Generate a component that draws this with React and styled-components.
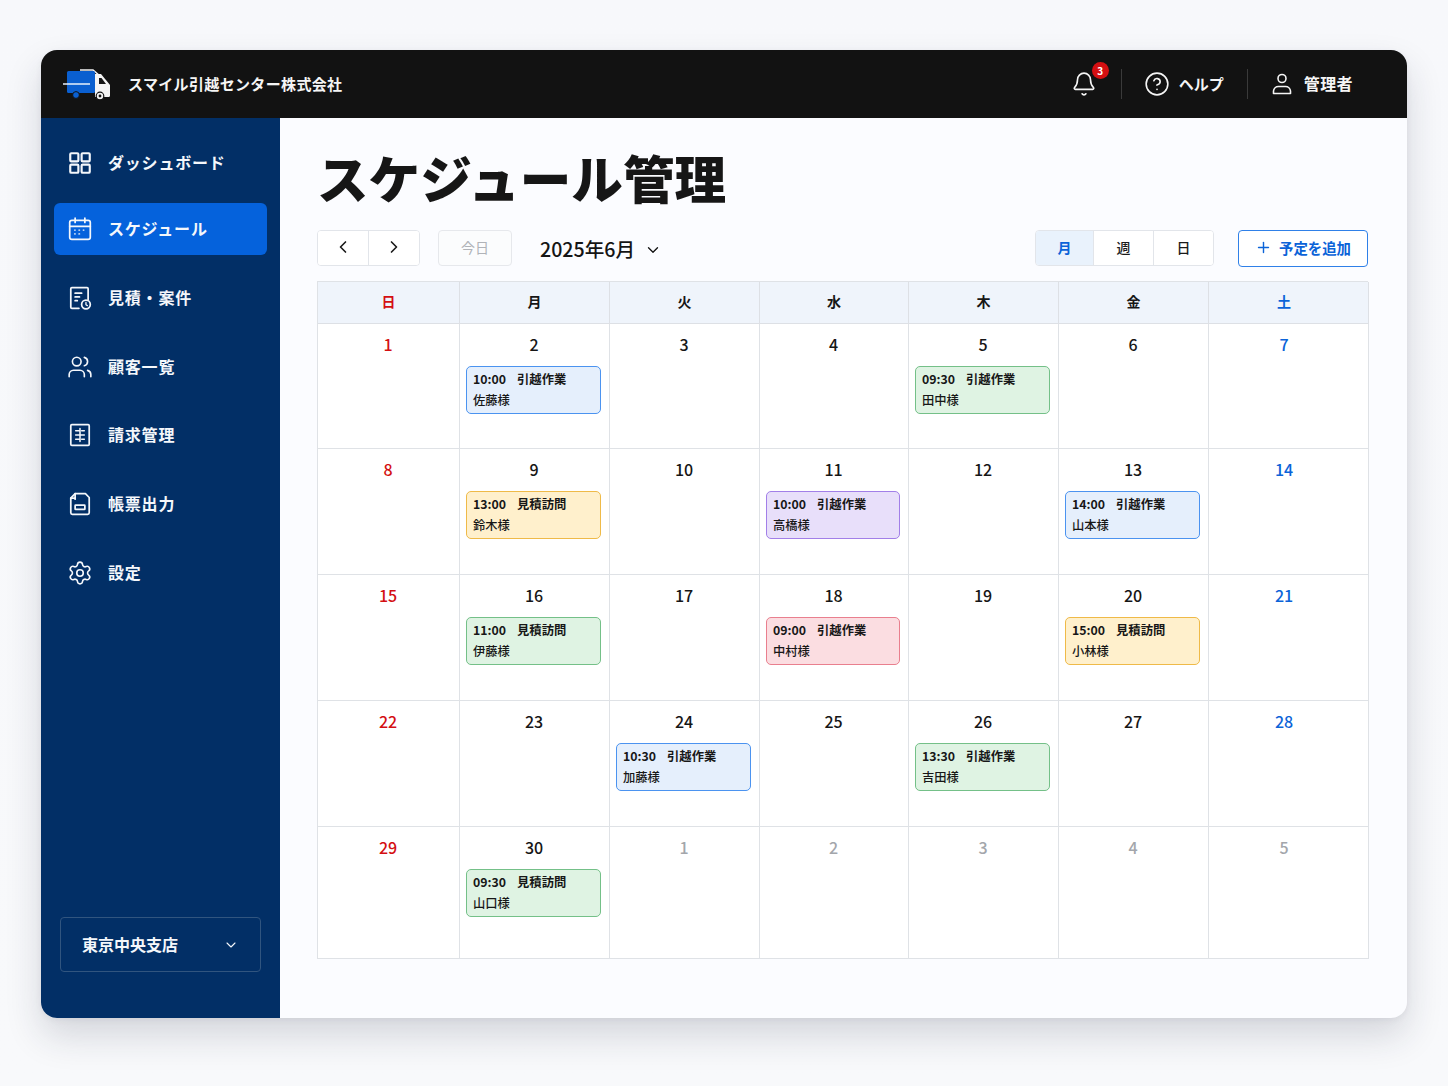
import React from "react";
import styled, { createGlobalStyle } from "styled-components";
import { ChevronLeft, ChevronRight, ChevronDown, Plus, Bell, CircleHelp, Settings, Users } from "lucide-react";

const Global = createGlobalStyle`
  html, body { margin: 0; padding: 0; }
  body {
    width: 1448px; height: 1086px; overflow: hidden;
    background: linear-gradient(180deg, #f7f8fb 0%, #f8f9fb 100%);
    font-family: "Noto Sans CJK JP", "Noto Sans", sans-serif;
    color: #141414;
  }
  * { box-sizing: border-box; }
`;

const Page = styled.div`
  padding: 50px 41px 68px;
  height: 1086px;
`;
const Win = styled.div`
  height: 968px;
  border-radius: 16px;
  overflow: hidden;
  display: flex;
  flex-direction: column;
  background: #fbfcff;
  box-shadow: 0 18px 36px rgba(30, 40, 60, 0.16), 0 2px 6px rgba(30, 40, 60, 0.06);
`;
const Header = styled.header`
  height: 68px;
  flex: none;
  background: #121212;
  color: #f5f5f5;
  display: flex;
  align-items: center;
  padding: 0 54px 0 22px;
`;
const Brand = styled.div`
  display: flex;
  align-items: center;
  gap: 17px;
  font-size: 15px;
  font-weight: 700;
  letter-spacing: 0.35px;
  flex: 1;
`;
const HeaderItem = styled.div`
  display: flex;
  align-items: center;
  gap: ${(p) => p.$gap || 9}px;
  font-size: ${(p) => p.$fs || 16}px;
  font-weight: 700;
  letter-spacing: ${(p) => p.$ls || 0}px;
  position: relative;
`;
const Label = styled.span`
  padding-bottom: 2px;
`;
const VRule = styled.div`
  width: 1px;
  height: 30px;
  background: #3a3a3a;
  margin: ${(p) => p.$m};
`;
const Badge = styled.span`
  position: absolute;
  top: -9px;
  right: -12px;
  width: 17px;
  height: 17px;
  border-radius: 50%;
  background: #d40f12;
  color: #fff;
  font-size: 10px;
  font-weight: 700;
  display: flex;
  align-items: center;
  justify-content: center;
`;
const Body = styled.div`
  flex: 1;
  display: flex;
  min-height: 0;
`;
const Side = styled.aside`
  width: 239px;
  flex: none;
  background: #022f66;
  padding: 19px 13px 46px;
  display: flex;
  flex-direction: column;
`;
const NavItem = styled.div`
  height: 52px;
  flex: none;
  margin-bottom: 16.75px;
  margin-top: ${(p) => (p.$active ? "-2.75px" : "0")};
  border-radius: 6px;
  display: flex;
  align-items: center;
  gap: 15px;
  padding-left: 13px;
  color: #f4f7fb;
  font-size: 16px;
  font-weight: 700;
  letter-spacing: 0.8px;
  background: ${(p) => (p.$active ? "#0562dc" : "transparent")};
`;
const Branch = styled.div`
  margin: auto 6px 0;
  height: 55px;
  flex: none;
  border: 1px solid #31557f;
  border-radius: 4px;
  display: flex;
  align-items: center;
  justify-content: space-between;
  padding: 0 21px 0 21px;
  color: #f4f7fb;
  font-size: 16px;
  font-weight: 700;
`;
const Main = styled.main`
  flex: 1;
  padding: 28px 39px 0 37px;
  min-width: 0;
`;
const Title = styled.h1`
  margin: 0 0 16px;
  height: 68px;
  line-height: 62px;
  font-size: 51.6px;
  font-weight: 900;
  color: #161616;
`;
const Toolbar = styled.div`
  display: flex;
  align-items: center;
  height: 36px;
  margin-bottom: 15px;
`;
const BtnGroup = styled.div`
  display: flex;
  height: 36px;
  border: 1px solid #e2e5ea;
  border-radius: 4px;
  overflow: hidden;
  background: #fff;
  margin-right: ${(p) => p.$mr || 0}px;
`;
const SegBtn = styled.div`
  width: ${(p) => p.$w}px;
  display: flex;
  align-items: center;
  justify-content: center;
  font-size: 14px;
  padding-bottom: 2px;
  font-weight: ${(p) => (p.$active ? 700 : 500)};
  color: ${(p) => (p.$active ? "#0b63d8" : "#1a1a1a")};
  background: ${(p) => (p.$active ? "#e9f2fc" : "#fff")};
  & + & { border-left: 1px solid #e2e5ea; }
`;
const TodayBtn = styled.div`
  width: 74px;
  height: 36px;
  border: 1px solid #e6e8ec;
  border-radius: 4px;
  background: #fbfcfd;
  color: #b0b3b8;
  font-size: 14px;
  padding-bottom: 2px;
  display: flex;
  align-items: center;
  justify-content: center;
`;
const Month = styled.div`
  margin-left: 28px;
  display: flex;
  align-items: center;
  gap: 9px;
  font-size: 19.6px;
  font-weight: 500;
  padding-top: 3px;
  flex: 1;
  color: #151515;
`;
const AddBtn = styled.div`
  width: 130px;
  height: 37px;
  margin-left: 24px;
  padding-bottom: 2px;
  border: 1px solid #2f80e8;
  border-radius: 4px;
  background: #fff;
  color: #0b63d8;
  font-size: 14.4px;
  font-weight: 700;
  display: flex;
  align-items: center;
  justify-content: center;
  gap: 7px;
`;
const Grid = styled.div`
  width: 1051px;
  display: grid;
  grid-template-columns: 142px 150px 150px 149px 150px 150px 160px;
  grid-template-rows: 42px 125px 126px 126px 126px 132px;
  border-top: 1px solid #dfe2e6;
  border-left: 1px solid #dfe2e6;
`;
const Head = styled.div`
  background: #eff4fb;
  border-right: 1px solid #dde0e5;
  border-bottom: 1px solid #dde0e5;
  display: flex;
  align-items: center;
  justify-content: center;
  padding: 0 ${(p) => (p.$last ? 9 : 0)}px 4px 0;
  font-size: 14px;
  font-weight: 700;
  color: ${(p) => p.$c};
`;
const Cell = styled.div`
  background: #fff;
  border-right: 1px solid #dfe2e6;
  border-bottom: 1px solid #dfe2e6;
  padding: 7px 8px 0 6px;
  display: flex;
  flex-direction: column;
`;
const Num = styled.div`
  height: 26px;
  line-height: 26px;
  margin: 0 ${(p) => (p.$last ? 8 : 0)}px 9px 1px;
  text-align: center;
  font-size: 16px;
  font-weight: 500;
  color: ${(p) => p.$c};
`;
const Ev = styled.div`
  height: 48px;
  border: 1.5px solid ${(p) => p.$b};
  background: ${(p) => p.$bg};
  border-radius: 5px;
  padding: 2px 0 0 6px;
  font-size: 12.3px;
  font-weight: 500;
  line-height: 21px;
  color: #171717;
  white-space: nowrap;
`;
const EvLine = styled.div`
  font-weight: 700;
  display: flex;
`;
const EvTime = styled.span`
  margin-right: 11px;
`;

const ic = { fill: "none", stroke: "currentColor", strokeWidth: 1.6, strokeLinecap: "round", strokeLinejoin: "round" };
const Svg = ({ children, s = 26 }) => <svg width={s} height={s} viewBox="0 0 24 24" style={{ flex: "none" }} {...ic}>{children}</svg>;

const IDash = () => <Svg><g strokeWidth="2"><rect x="3" y="3" width="7.5" height="7.5" rx="1" /><rect x="13.5" y="3" width="7.5" height="7.5" rx="1" /><rect x="3" y="13.5" width="7.5" height="7.5" rx="1" /><rect x="13.5" y="13.5" width="7.5" height="7.5" rx="1" /></g></Svg>;
const ICal = () => <Svg><rect x="2.5" y="4" width="19" height="17.5" rx="2" /><path d="M2.5 9.5h19M7.5 2v4M16.5 2v4" /><path d="M7 13h.6M11 13h.6M15 13h.6M7 16.5h.6M11 16.5h.6" strokeWidth="1.3" /></Svg>;
const IEst = () => <Svg><path d="M11 21.5H4.5a1 1 0 0 1-1-1v-17a1 1 0 0 1 1-1h14a1 1 0 0 1 1 1v10" /><path d="M7.5 7.5h6M7.5 11h4M7.5 14.5h2" /><circle cx="17.5" cy="18" r="4" /><path d="M17.5 16v2.2l1.3.8" strokeWidth="1.2" /></Svg>;
const IBill = () => <Svg><path d="M4.5 2.5h15a1 1 0 0 1 1 1v17a1 1 0 0 1-1 1h-15a1 1 0 0 1-1-1v-17a1 1 0 0 1 1-1z" /><path d="M8 8h3M13.5 8h2.5M8 12h8M8 16h3M13.5 16h2.5M12 6v12" strokeWidth="1.4" /></Svg>;
const IForm = () => <Svg><path d="M7.5 2.5h9.5l3.5 3.5v14a1.5 1.5 0 0 1-1.5 1.5H5a1.5 1.5 0 0 1-1.5-1.5V6.5z" /><path d="M7.5 2.5v5M3.5 6.5h4" /><rect x="7.5" y="13" width="9" height="4" rx=".5" /></Svg>;
const IUser = () => <Svg s={24}><circle cx="12" cy="6.5" r="4" /><path d="M3.5 21.5v-2.5a5 5 0 0 1 5-4.5h7a5 5 0 0 1 5 4.5v2.5z" /></Svg>;
const Truck = () => (
  <svg width="48" height="34" viewBox="0 0 48 34" style={{ flex: "none" }}>
    <path d="M17 3 L30 3 L37 9" fill="none" stroke="#f2f2f2" strokeWidth="1.6" />
    <rect x="4" y="4" width="28" height="22" rx="1.5" fill="#0a5fd0" />
    <path d="M0 17h27" stroke="#e8f0fb" strokeWidth="1.6" />
    <path d="M32 7h6l9 11v10.5a1.5 1.5 0 0 1-1.5 1.5H32z" fill="#f4f4f4" />
    <path d="M36 11h2.5l4.5 6h-7z" fill="#141414" />
    <circle cx="13" cy="28" r="3.4" fill="#0a5fd0" stroke="#121212" strokeWidth="1" />
    <circle cx="37" cy="29" r="3.8" fill="#f4f4f4" stroke="#121212" strokeWidth="1.2" />
    <circle cx="37" cy="29" r="1.4" fill="#121212" />
  </svg>
);

const nav = [
  ["ダッシュボード", <IDash />],
  ["スケジュール", <ICal />, true],
  ["見積・案件", <IEst />],
  ["顧客一覧", <Users size={26} strokeWidth={1.5} />],
  ["請求管理", <IBill />],
  ["帳票出力", <IForm />],
  ["設定", <Settings size={26} strokeWidth={1.5} />],
];

const K = {
  blue: ["#e5effc", "#4b93f0"],
  green: ["#dff3e3", "#74c088"],
  yellow: ["#fff0cc", "#efba48"],
  purple: ["#e8dffa", "#a27fe8"],
  red: ["#fbdde1", "#e97f8e"],
};
const RED = "#d40f12", BLUE = "#0b63d8", DARK = "#161616", GREY = "#a3a6ab";
const heads = [["日", RED], ["月", DARK], ["火", DARK], ["水", DARK], ["木", DARK], ["金", DARK], ["土", BLUE]];
const events = {
  2: ["blue", "10:00", "引越作業", "佐藤様"],
  5: ["green", "09:30", "引越作業", "田中様"],
  9: ["yellow", "13:00", "見積訪問", "鈴木様"],
  11: ["purple", "10:00", "引越作業", "高橋様"],
  13: ["blue", "14:00", "引越作業", "山本様"],
  16: ["green", "11:00", "見積訪問", "伊藤様"],
  18: ["red", "09:00", "引越作業", "中村様"],
  20: ["yellow", "15:00", "見積訪問", "小林様"],
  24: ["blue", "10:30", "引越作業", "加藤様"],
  26: ["green", "13:30", "引越作業", "吉田様"],
  30: ["green", "09:30", "見積訪問", "山口様"],
};
const days = [];
for (let d = 1; d <= 30; d++) days.push({ d, cur: true });
for (let d = 1; d <= 5; d++) days.push({ d, cur: false });

export default function App() {
  return (
    <Page>
      <Global />
      <Win>
        <Header>
          <Brand><Truck /><Label>スマイル引越センター株式会社</Label></Brand>
          <HeaderItem>
            <Bell size={26} strokeWidth={1.5} />
            <Badge>3</Badge>
          </HeaderItem>
          <VRule $m="0 22px 0 24px" />
          <HeaderItem $gap={9} $fs={15}><CircleHelp size={26} strokeWidth={1.5} /><Label>ヘルプ</Label></HeaderItem>
          <VRule $m="0 22px 0 23px" />
          <HeaderItem $gap={10} $ls={0.4}><IUser /><Label>管理者</Label></HeaderItem>
        </Header>
        <Body>
          <Side>
            {nav.map(([t, i, a]) => <NavItem key={t} $active={a}>{i}<Label>{t}</Label></NavItem>)}
            <Branch><Label>東京中央支店</Label><ChevronDown size={16} strokeWidth={1.6} /></Branch>
          </Side>
          <Main>
            <Title>スケジュール管理</Title>
            <Toolbar>
              <BtnGroup $mr={18}>
                <SegBtn $w={50}><ChevronLeft size={20} strokeWidth={2} /></SegBtn>
                <SegBtn $w={51}><ChevronRight size={20} strokeWidth={2} /></SegBtn>
              </BtnGroup>
              <TodayBtn>今日</TodayBtn>
              <Month><Label>2025年6月</Label><ChevronDown size={18} strokeWidth={1.8} /></Month>
              <BtnGroup>
                <SegBtn $w={57} $active>月</SegBtn>
                <SegBtn $w={60}>週</SegBtn>
                <SegBtn $w={60}>日</SegBtn>
              </BtnGroup>
              <AddBtn><Plus size={17} strokeWidth={2} />予定を追加</AddBtn>
            </Toolbar>
            <Grid>
              {heads.map(([h, c], i) => <Head key={h} $c={c} $last={i === 6}>{h}</Head>)}
              {days.map(({ d, cur }, i) => {
                const col = i % 7;
                const c = !cur ? GREY : col === 0 ? RED : col === 6 ? BLUE : DARK;
                const e = cur ? events[d] : null;
                return (
                  <Cell key={i}>
                    <Num $c={c} $last={col === 6}>{d}</Num>
                    {e && (
                      <Ev $bg={K[e[0]][0]} $b={K[e[0]][1]}>
                        <EvLine><EvTime>{e[1]}</EvTime>{e[2]}</EvLine>
                        {e[3]}
                      </Ev>
                    )}
                  </Cell>
                );
              })}
            </Grid>
          </Main>
        </Body>
      </Win>
    </Page>
  );
}
